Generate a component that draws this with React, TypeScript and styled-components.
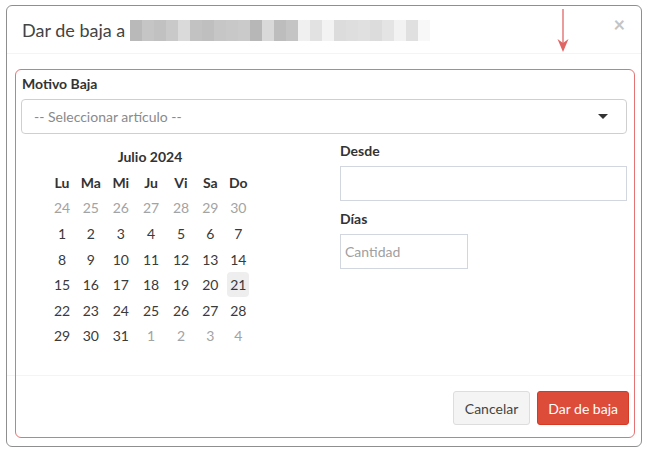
import React from "react";
import styled, { createGlobalStyle } from "styled-components";

const Global = createGlobalStyle`
  html, body { margin: 0; padding: 0; background: #fff; }
  body { font-family: "Lato", "Noto Sans", sans-serif; color: #333; font-size: 14px; }
  * { box-sizing: border-box; }
`;

const Page = styled.div`
  position: relative;
  width: 646px;
  height: 452px;
  padding: 5px 5px 6px 6px;
`;

const Modal = styled.div`
  width: 636px;
  height: 442px;
  border: 1px solid #8f8f8f;
  border-radius: 6px;
  background: #fff;
  display: flex;
  flex-direction: column;
  overflow: hidden;
`;

const Header = styled.div`
  height: 48px;
  padding: 0 14px 0 15px;
  border-bottom: 1px solid #f4f4f4;
  display: flex;
  align-items: center;
  justify-content: space-between;
`;

const Title = styled.h4`
  margin: 0;
  font-size: 18px;
  font-weight: 400;
  color: #444;
  line-height: 26px;
  display: flex;
  align-items: center;
  gap: 5px;
`;

const Redaction = styled.span`
  display: inline-flex;
  height: 21px;
  margin-top: 1px;
`;

const Pixel = styled.span<{ $c: string }>`
  width: 12px;
  height: 21px;
  background: ${(p) => p.$c};
`;

const Close = styled.span`
  font-size: 20px;
  font-weight: 700;
  color: #c4c4c4;
  line-height: 1;
  margin-top: -12px;
  margin-right: 2px;
`;

const Body = styled.div`
  flex: 1;
  padding: 20px 13px 0 15px;
`;

const Label = styled.div`
  font-weight: 700;
  font-size: 14px;
  line-height: 20px;
  color: #333;
  margin-bottom: 5px;
`;

const Select = styled.div`
  width: 606px;
  margin-left: -1px;
  height: 35px;
  border: 1px solid #cfcfcf;
  border-radius: 4px;
  padding: 0 18px 0 12px;
  display: flex;
  align-items: center;
  justify-content: space-between;
  color: #8a8a8a;
  font-size: 14px;
`;

const Caret = styled.span`
  width: 0;
  height: 0;
  border-left: 5px solid transparent;
  border-right: 5px solid transparent;
  border-top: 5px solid #333;
`;

const Columns = styled.div`
  display: grid;
  grid-template-columns: 319px 287px;
  margin-left: -1px;
`;

const Calendar = styled.div`
  margin: 10px 0 0 27px;
  display: grid;
  grid-template-columns: 28px 29.5px 30.5px 30px 30px 28.5px 27.5px;
  grid-auto-rows: 25.6px;
  width: 204px;
`;

const MonthTitle = styled.div`
  grid-column: 1 / -1;
  text-align: center;
  font-weight: 700;
  line-height: 25.6px;
`;

const Cell = styled.div`
  display: flex;
  align-items: center;
  justify-content: center;
`;

const DayHead = styled.span`
  font-weight: 700;
  color: #333;
`;

const Day = styled.span<{ $muted?: boolean; $active?: boolean }>`
  width: 22px;
  height: 25px;
  display: flex;
  align-items: center;
  justify-content: center;
  border-radius: 4px;
  color: ${(p) => (p.$muted ? "#a3a3a3" : "#3a3a3a")};
  background: ${(p) => (p.$active ? "#eeeeee" : "transparent")};
`;

const RightCol = styled.div`
  padding-top: 7px;
`;

const FormGroup = styled.div`
  margin-bottom: 8px;
`;

const Input = styled.div<{ $w?: number }>`
  width: ${(p) => (p.$w ? `${p.$w}px` : "100%")};
  height: 35px;
  border: 1px solid #d2d6de;
  padding: 0 4px;
  display: flex;
  align-items: center;
  color: #a0a0a0;
  font-size: 14px;
`;

const Footer = styled.div`
  border-top: 1px solid #f4f4f4;
  height: 71px;
  padding: 15px 12px 0 15px;
  display: flex;
  justify-content: flex-end;
  align-items: flex-start;
  gap: 7px;
`;

const Button = styled.button<{ $primary?: boolean }>`
  font-family: inherit;
  font-size: 14px;
  height: 34px;
  padding: 0 ${(p) => (p.$primary ? 10 : 11)}px;
  border-radius: 3px;
  border: 1px solid ${(p) => (p.$primary ? "#d73925" : "#ddd")};
  background: ${(p) => (p.$primary ? "#dd4b39" : "#f4f4f4")};
  color: ${(p) => (p.$primary ? "#fff" : "#444")};
`;

const Annotation = styled.div`
  position: absolute;
  left: 15px;
  top: 69px;
  width: 620px;
  height: 369px;
  border: 1.5px solid #e57373;
  border-radius: 6px;
  pointer-events: none;
`;

const Arrow = styled.svg`
  position: absolute;
  left: 556px;
  top: 8px;
`;

const pixels = [
  "#b9b9b9", "#c5c5c5", "#c1c1c1", "#c9c9c9", "#dadada", "#c2c2c2", "#bfbfbf",
  "#c6c6c6", "#c8c8c8", "#cacaca", "#b7b7b7", "#d9d9d9", "#bdbdbd", "#c4c4c4",
  "#f0f0f0", "#e2e2e2", "#f3f3f3", "#dcdcdc", "#dedede", "#e0e0e0", "#dcdcdc",
  "#e4e4e4", "#f2f2f2", "#e0e0e0", "#f8f8f8",
];

const heads = ["Lu", "Ma", "Mi", "Ju", "Vi", "Sa", "Do"];

type D = { n: number; muted?: boolean; active?: boolean };
const days: D[] = [
  ...[24, 25, 26, 27, 28, 29, 30].map((n) => ({ n, muted: true })),
  ...Array.from({ length: 31 }, (_, i) => ({ n: i + 1, active: i + 1 === 21 })),
  ...[1, 2, 3, 4].map((n) => ({ n, muted: true })),
];

export default function App() {
  return (
    <>
      <Global />
      <Page>
        <Modal>
          <Header>
            <Title>
              Dar de baja a
              <Redaction>
                {pixels.map((c, i) => (
                  <Pixel key={i} $c={c} />
                ))}
              </Redaction>
            </Title>
            <Close>×</Close>
          </Header>
          <Body>
            <Label>Motivo Baja</Label>
            <Select>
              <span>-- Seleccionar artículo --</span>
              <Caret />
            </Select>
            <Columns>
              <Calendar>
                <MonthTitle>Julio 2024</MonthTitle>
                {heads.map((h) => (
                  <Cell key={h}>
                    <DayHead>{h}</DayHead>
                  </Cell>
                ))}
                {days.map((d, i) => (
                  <Cell key={i}>
                    <Day $muted={d.muted} $active={d.active}>
                      {d.n}
                    </Day>
                  </Cell>
                ))}
              </Calendar>
              <RightCol>
                <FormGroup>
                  <Label>Desde</Label>
                  <Input />
                </FormGroup>
                <FormGroup>
                  <Label>Días</Label>
                  <Input $w={128}>Cantidad</Input>
                </FormGroup>
              </RightCol>
            </Columns>
          </Body>
          <Footer>
            <Button>Cancelar</Button>
            <Button $primary>Dar de baja</Button>
          </Footer>
        </Modal>
        <Annotation />
        <Arrow width="14" height="46" viewBox="0 0 14 46">
          <line x1="7" y1="1" x2="7" y2="36" stroke="#e06666" strokeWidth="1.3" />
          <path d="M1.5 31 L7 44 L12.5 31 L7 35 Z" fill="#e06666" />
        </Arrow>
      </Page>
    </>
  );
}
